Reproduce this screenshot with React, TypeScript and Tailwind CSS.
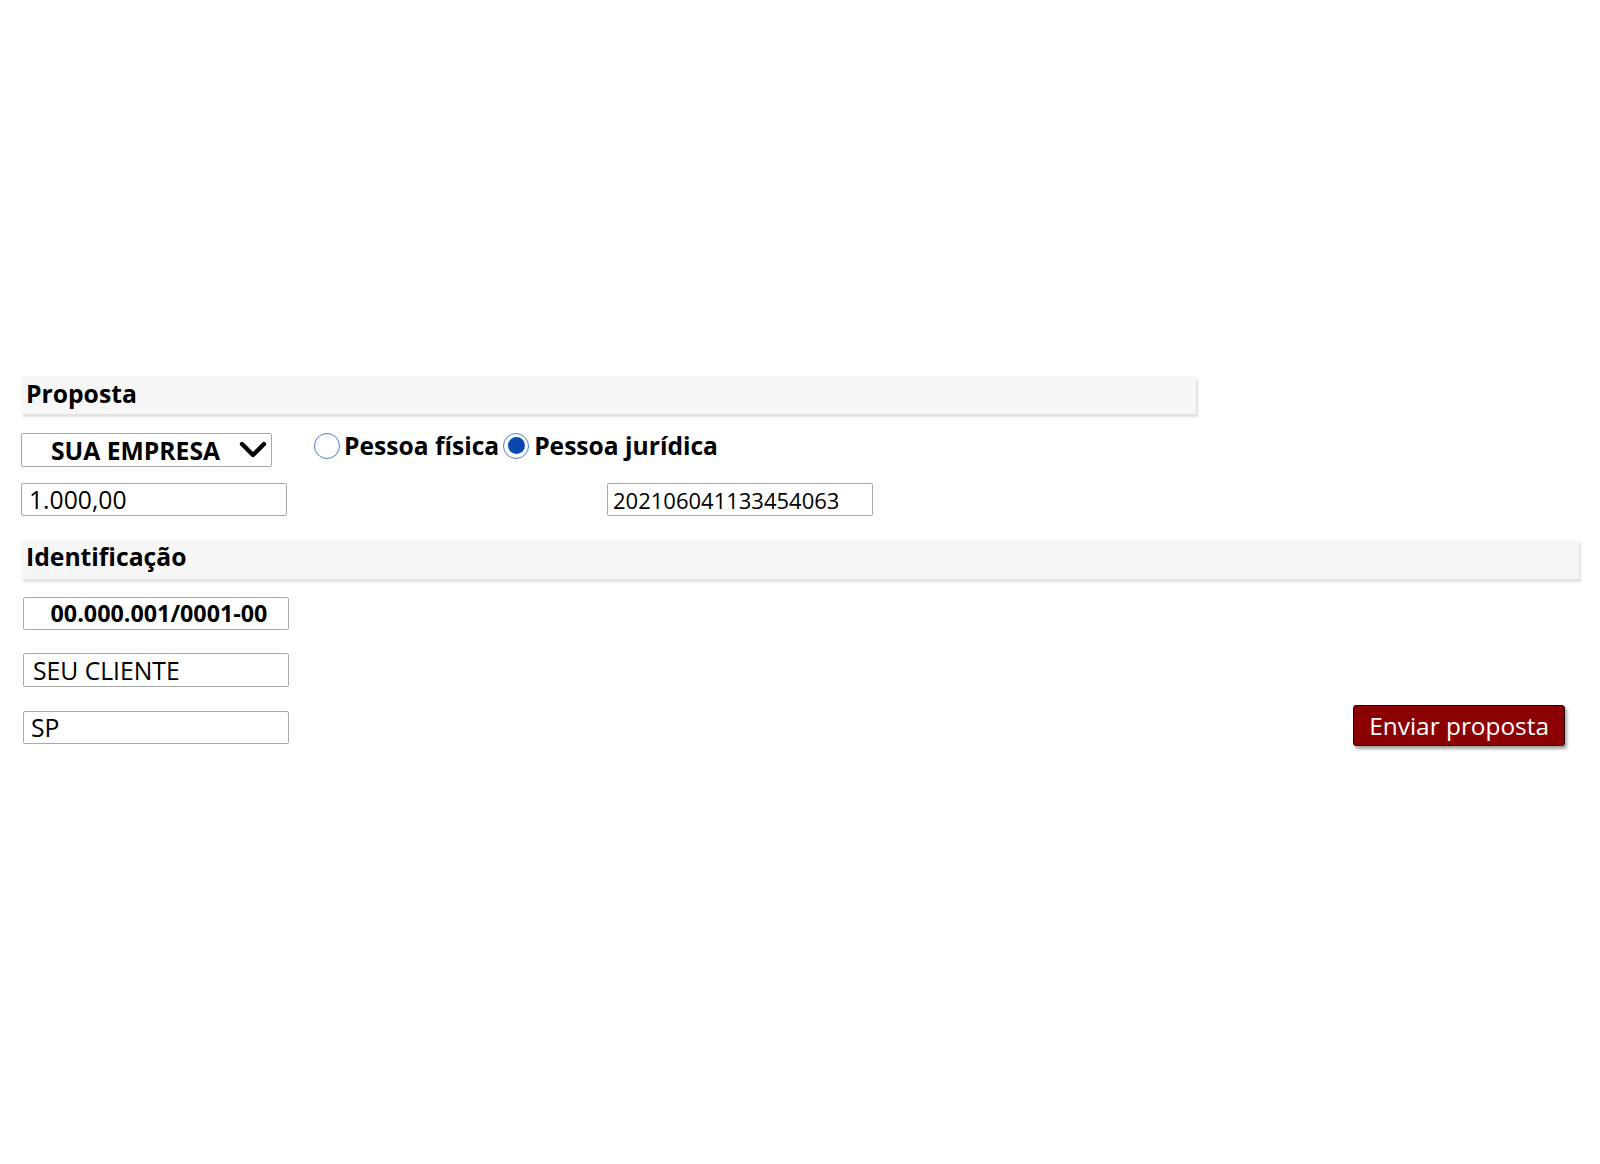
import React from "react";

function Radio({ checked }: { checked?: boolean }) {
  return (
    <span className="flex h-[26px] w-[26px] shrink-0 items-center justify-center rounded-full border border-[#4a7fd6] bg-white">
      {checked ? <span className="h-[17px] w-[17px] rounded-full bg-[#0848b0]" /> : null}
    </span>
  );
}

export default function App() {
  return (
    <div
      className="min-h-[1164px] w-full bg-white px-[21px] pt-[376px] text-black"
      style={{ fontFamily: '"Open Sans", "Noto Sans", Arial, sans-serif' }}
    >
      {/* Proposta */}
      <div className="h-[38px] w-[1175px] bg-[#f7f7f7] pl-[5px] pt-[1px] text-[24.7px] font-bold leading-[33px] shadow-[2px_3px_2px_#e2e2e2]">
        Proposta
      </div>

      <div className="mt-[19px] flex items-start">
        <div className="flex h-[34px] w-[251px] items-center rounded-[2px] border border-[#a9a9a9] pl-[29px] pr-[4px]">
          <span className="text-[24.7px] font-bold leading-[33px]">SUA EMPRESA</span>
          <svg className="ml-auto" width="28" height="18" viewBox="0 0 28 18" fill="none">
            <polyline points="3,3 14,14 25,3" stroke="#000" strokeWidth="4.4" strokeLinecap="round" strokeLinejoin="round" />
          </svg>
        </div>
        <div className="ml-[42px] mt-[-4px] flex items-center text-[24.6px] font-bold leading-[33px]">
          <Radio />
          <span className="ml-[4px]">Pessoa física</span>
          <span className="ml-[4px]">
            <Radio checked />
          </span>
          <span className="ml-[5px]">Pessoa jurídica</span>
        </div>
      </div>

      <div className="mt-[16px] flex items-start">
        <div className="flex h-[33px] w-[266px] items-center rounded-[2px] border border-[#a9a9a9] pl-[7px] text-[24.7px] leading-[33px]">
          1.000,00
        </div>
        <div className="ml-[320px] flex h-[33px] w-[266px] items-center rounded-[2px] border border-[#a9a9a9] pl-[5px] text-[22px] leading-[30px]">
          202106041133454063
        </div>
      </div>

      {/* Identificação */}
      <div className="mt-[24px] h-[39px] w-[1558px] bg-[#f7f7f7] pl-[5px] text-[24.7px] font-bold leading-[33px] shadow-[2px_3px_2px_#e2e2e2]">
        Identificação
      </div>

      <div className="ml-[2px] mt-[18px] flex flex-col">
        <div className="flex h-[33px] w-[266px] items-center justify-center rounded-[2px] border border-[#a9a9a9] pl-[6px] text-[23.3px] font-bold leading-[33px]">
          00.000.001/0001-00
        </div>
        <div className="mt-[23px] flex h-[34px] w-[266px] items-center rounded-[2px] border border-[#a9a9a9] pl-[9px] text-[24.7px] leading-[33px]">
          SEU CLIENTE
        </div>
        <div className="mt-[24px] flex items-start justify-between">
          <div className="flex h-[33px] w-[266px] items-center rounded-[2px] border border-[#a9a9a9] pl-[7px] text-[24.7px] leading-[33px]">
            SP
          </div>
          <button className="mr-[14px] mt-[-6px] h-[41px] rounded-[3px] border border-[#2b0000] bg-[#8b0000] px-[15px] text-[24.4px] leading-[33px] text-white shadow-[2px_3px_3px_rgba(0,0,0,0.35)]">
            Enviar proposta
          </button>
        </div>
      </div>
    </div>
  );
}
